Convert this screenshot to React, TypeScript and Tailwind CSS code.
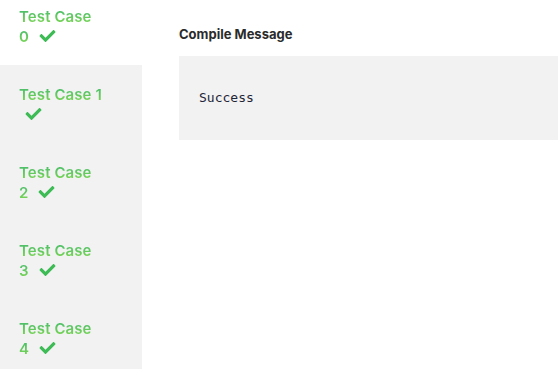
import { FaCheck } from "react-icons/fa";

const cases = [0, 1, 2, 3, 4];

function CaseLabel({ n }: { n: number }) {
  const check = <FaCheck className="inline-block ml-[6px] -mt-[3px] w-[17px] h-[16px] text-[#3dbb55]" />;
  const grad = "bg-gradient-to-b from-[#3fb86e] to-[#80d94b] bg-clip-text text-transparent";
  // "Test Case 1" fits on one line, the others wrap the number
  return (
    <div className="text-[15px] leading-[20px] font-semibold tracking-[0.1px]">
      {n === 1 ? (
        <>
          <span className={grad}>Test Case 1</span>
          <br />
          {check}
        </>
      ) : (
        <>
          <span className={grad}>Test Case</span>
          <br />
          <span className={grad}>{n}</span> {check}
        </>
      )}
    </div>
  );
}

export default function App() {
  return (
    <div className="flex w-[558px] h-[369px] bg-white overflow-hidden" style={{ fontFamily: "Inter, 'Noto Sans', sans-serif" }}>
      {/* Sidebar */}
      <div className="w-[142px] shrink-0 bg-[#f2f2f2] flex flex-col">
        {cases.map((n) => (
          <div
            key={n}
            className={
              n === 0
                ? "h-[65px] shrink-0 bg-white px-[19px] pt-[7px]"
                : "h-[78px] shrink-0 px-[19px] pt-[20px]"
            }
          >
            <CaseLabel n={n} />
          </div>
        ))}
      </div>

      {/* Content */}
      <div className="flex-1 pl-[37px] pt-[24px]">
        <h2 className="text-[13px] font-bold text-[#2b2b2b] leading-[20px]">Compile Message</h2>
        <div className="mt-[12px] h-[84px] bg-[#f2f2f2] pl-[20px] flex items-center">
          <span className="text-[13px] text-[#1f2537]" style={{ fontFamily: "'DejaVu Sans Mono', monospace" }}>
            Success
          </span>
        </div>
      </div>
    </div>
  );
}
